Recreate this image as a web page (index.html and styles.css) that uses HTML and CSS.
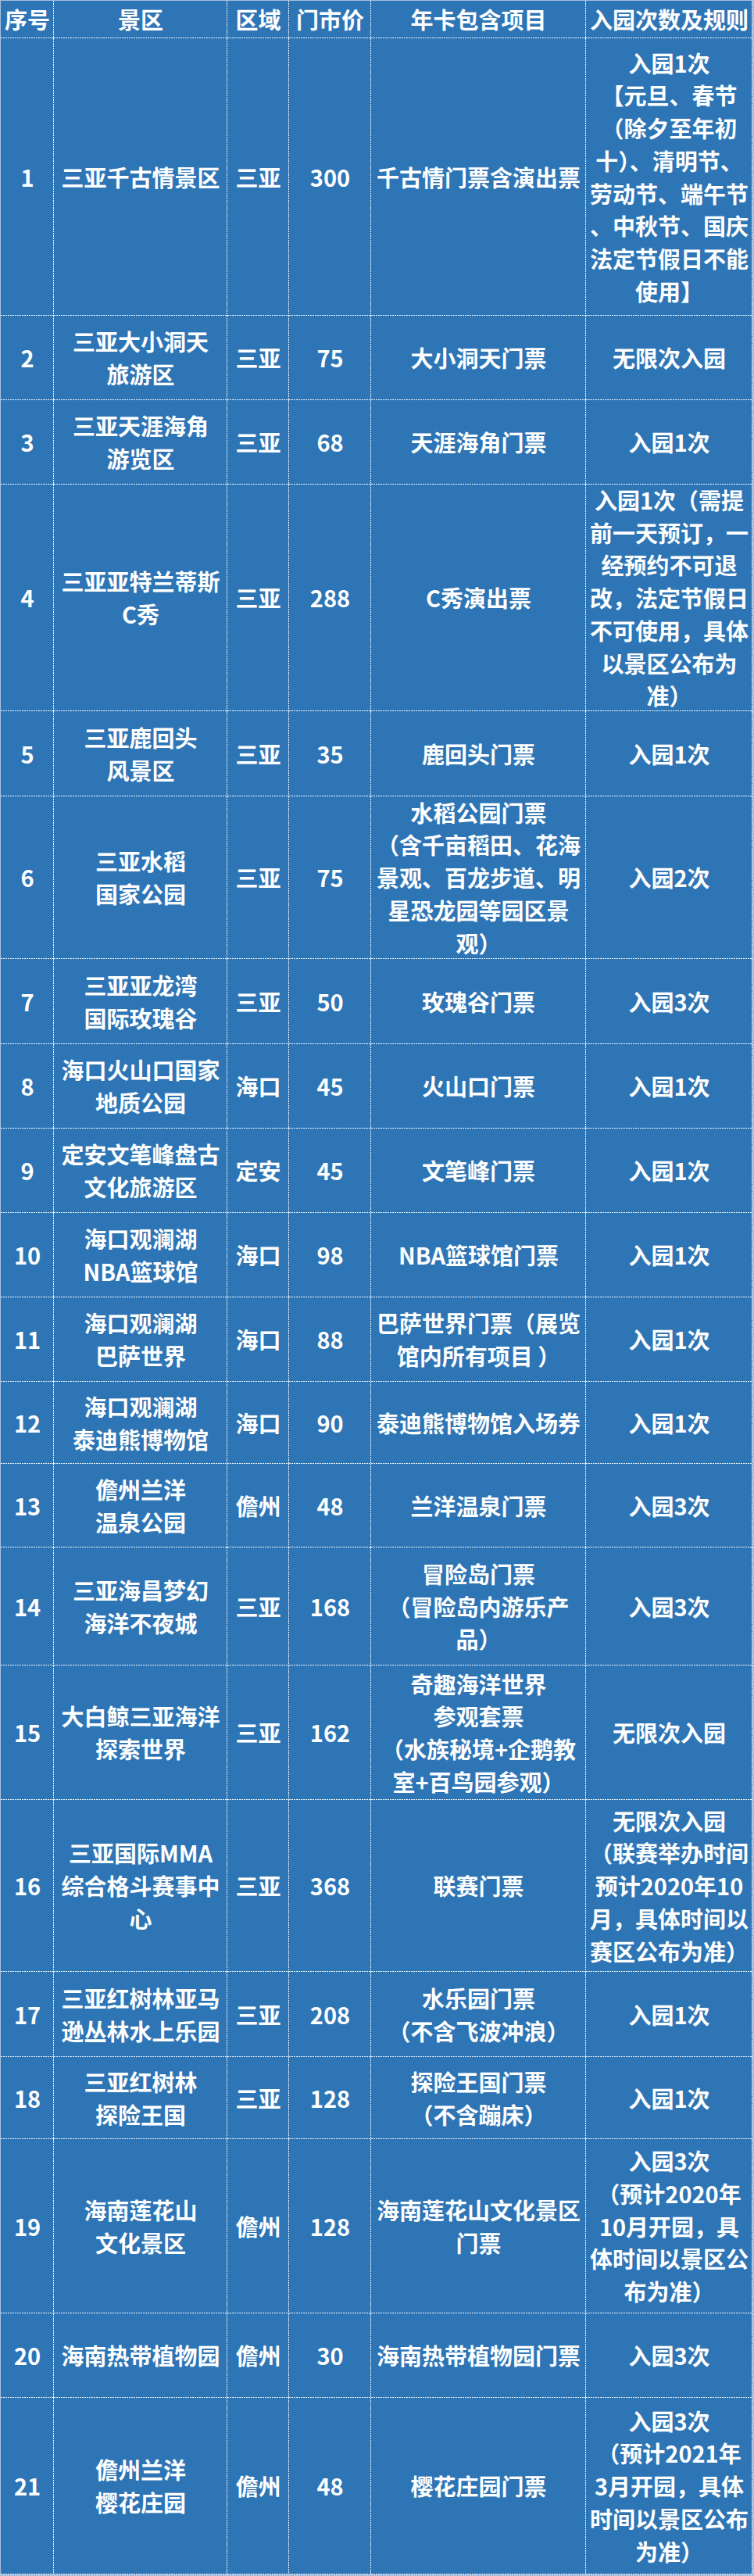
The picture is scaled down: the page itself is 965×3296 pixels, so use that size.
FILE: index.html
```html
<!DOCTYPE html>
<html lang="zh-CN">
<head>
<meta charset="utf-8">
<title>海南年卡景区</title>
<link rel="stylesheet" href="styles.css">
</head>
<body>
<div class="sheet">
  <div class="c">序号</div><div class="c">景区</div><div class="c">区域</div><div class="c">门市价</div><div class="c">年卡包含项目</div><div class="c">入园次数及规则</div>

  <div class="c">1</div><div class="c">三亚千古情景区</div><div class="c">三亚</div><div class="c">300</div><div class="c">千古情门票含演出票</div><div class="c">入园1次<br>【元旦、春节<br>（除夕至年初<br>十）、清明节、<br>劳动节、端午节<br>、中秋节、国庆<br>法定节假日不能<br>使用】</div>

  <div class="c">2</div><div class="c">三亚大小洞天<br>旅游区</div><div class="c">三亚</div><div class="c">75</div><div class="c">大小洞天门票</div><div class="c">无限次入园</div>

  <div class="c">3</div><div class="c">三亚天涯海角<br>游览区</div><div class="c">三亚</div><div class="c">68</div><div class="c">天涯海角门票</div><div class="c">入园1次</div>

  <div class="c">4</div><div class="c">三亚亚特兰蒂斯<br>C秀</div><div class="c">三亚</div><div class="c">288</div><div class="c">C秀演出票</div><div class="c">入园1次（需提<br>前一天预订，一<br>经预约不可退<br>改，法定节假日<br>不可使用，具体<br>以景区公布为<br>准）</div>

  <div class="c">5</div><div class="c">三亚鹿回头<br>风景区</div><div class="c">三亚</div><div class="c">35</div><div class="c">鹿回头门票</div><div class="c">入园1次</div>

  <div class="c">6</div><div class="c">三亚水稻<br>国家公园</div><div class="c">三亚</div><div class="c">75</div><div class="c">水稻公园门票<br>（含千亩稻田、花海<br>景观、百龙步道、明<br>星恐龙园等园区景<br>观）</div><div class="c">入园2次</div>

  <div class="c">7</div><div class="c">三亚亚龙湾<br>国际玫瑰谷</div><div class="c">三亚</div><div class="c">50</div><div class="c">玫瑰谷门票</div><div class="c">入园3次</div>

  <div class="c">8</div><div class="c">海口火山口国家<br>地质公园</div><div class="c">海口</div><div class="c">45</div><div class="c">火山口门票</div><div class="c">入园1次</div>

  <div class="c">9</div><div class="c">定安文笔峰盘古<br>文化旅游区</div><div class="c">定安</div><div class="c">45</div><div class="c">文笔峰门票</div><div class="c">入园1次</div>

  <div class="c">10</div><div class="c">海口观澜湖<br>NBA篮球馆</div><div class="c">海口</div><div class="c">98</div><div class="c">NBA篮球馆门票</div><div class="c">入园1次</div>

  <div class="c">11</div><div class="c">海口观澜湖<br>巴萨世界</div><div class="c">海口</div><div class="c">88</div><div class="c">巴萨世界门票（展览<br>馆内所有项目 ）</div><div class="c">入园1次</div>

  <div class="c">12</div><div class="c">海口观澜湖<br>泰迪熊博物馆</div><div class="c">海口</div><div class="c">90</div><div class="c">泰迪熊博物馆入场券</div><div class="c">入园1次</div>

  <div class="c">13</div><div class="c">儋州兰洋<br>温泉公园</div><div class="c">儋州</div><div class="c">48</div><div class="c">兰洋温泉门票</div><div class="c">入园3次</div>

  <div class="c">14</div><div class="c">三亚海昌梦幻<br>海洋不夜城</div><div class="c">三亚</div><div class="c">168</div><div class="c">冒险岛门票<br>（冒险岛内游乐产<br>品）</div><div class="c">入园3次</div>

  <div class="c">15</div><div class="c">大白鲸三亚海洋<br>探索世界</div><div class="c">三亚</div><div class="c">162</div><div class="c">奇趣海洋世界<br>参观套票<br>（水族秘境+企鹅教<br>室+百鸟园参观）</div><div class="c">无限次入园</div>

  <div class="c">16</div><div class="c">三亚国际MMA<br>综合格斗赛事中<br>心</div><div class="c">三亚</div><div class="c">368</div><div class="c">联赛门票</div><div class="c">无限次入园<br>（联赛举办时间<br>预计2020年10<br>月，具体时间以<br>赛区公布为准）</div>

  <div class="c">17</div><div class="c">三亚红树林亚马<br>逊丛林水上乐园</div><div class="c">三亚</div><div class="c">208</div><div class="c">水乐园门票<br>（不含飞波冲浪）</div><div class="c">入园1次</div>

  <div class="c">18</div><div class="c">三亚红树林<br>探险王国</div><div class="c">三亚</div><div class="c">128</div><div class="c">探险王国门票<br>（不含蹦床）</div><div class="c">入园1次</div>

  <div class="c">19</div><div class="c">海南莲花山<br>文化景区</div><div class="c">儋州</div><div class="c">128</div><div class="c">海南莲花山文化景区<br>门票</div><div class="c">入园3次<br>（预计2020年<br>10月开园，具<br>体时间以景区公<br>布为准）</div>

  <div class="c">20</div><div class="c">海南热带植物园</div><div class="c">儋州</div><div class="c">30</div><div class="c">海南热带植物园门票</div><div class="c">入园3次</div>

  <div class="c">21</div><div class="c">儋州兰洋<br>樱花庄园</div><div class="c">儋州</div><div class="c">48</div><div class="c">樱花庄园门票</div><div class="c">入园3次<br>（预计2021年<br>3月开园，具体<br>时间以景区公布<br>为准）</div>
</div>
</body>
</html>
```

FILE: styles.css
```css
html, body {
  margin: 0;
  padding: 0;
  background: #ffffff;
}

.sheet {
  --ln: #eef3fa;
  box-sizing: border-box;
  width: 965px;
  height: 3296px;
  display: grid;
  grid-template-columns: 68px 222px 79px 105px 275px 213px;
  grid-template-rows:
    48px 355px 108px 108px 290px 109px 208px 109px 108px 108px 108px
    108px 105px 107px 151px 172px 220px 109px 105px 223px 108px 226px;
  background: #2e75b6;
  border-left: 1px solid #a7bfdf;
  border-top: 1px solid #a7bfdf;
  border-right: 2px solid #a7bfdf;
  border-bottom: 2px solid #a7bfdf;
  font-family: "Noto Sans CJK SC", "Noto Sans", sans-serif;
  font-weight: 700;
  font-size: 29px;
  line-height: 41.7px;
  color: #ffffff;
}

.c {
  display: flex;
  align-items: center;
  justify-content: center;
  text-align: center;
  white-space: nowrap;
  min-height: 0;
  background-image:
    repeating-linear-gradient(to bottom, var(--ln) 0 2px, transparent 2px 3px),
    repeating-linear-gradient(to right, var(--ln) 0 2px, transparent 2px 3px);
  background-size: 1px 100%, 100% 1px;
  background-position: right top, left bottom;
  background-repeat: no-repeat;
}
```
